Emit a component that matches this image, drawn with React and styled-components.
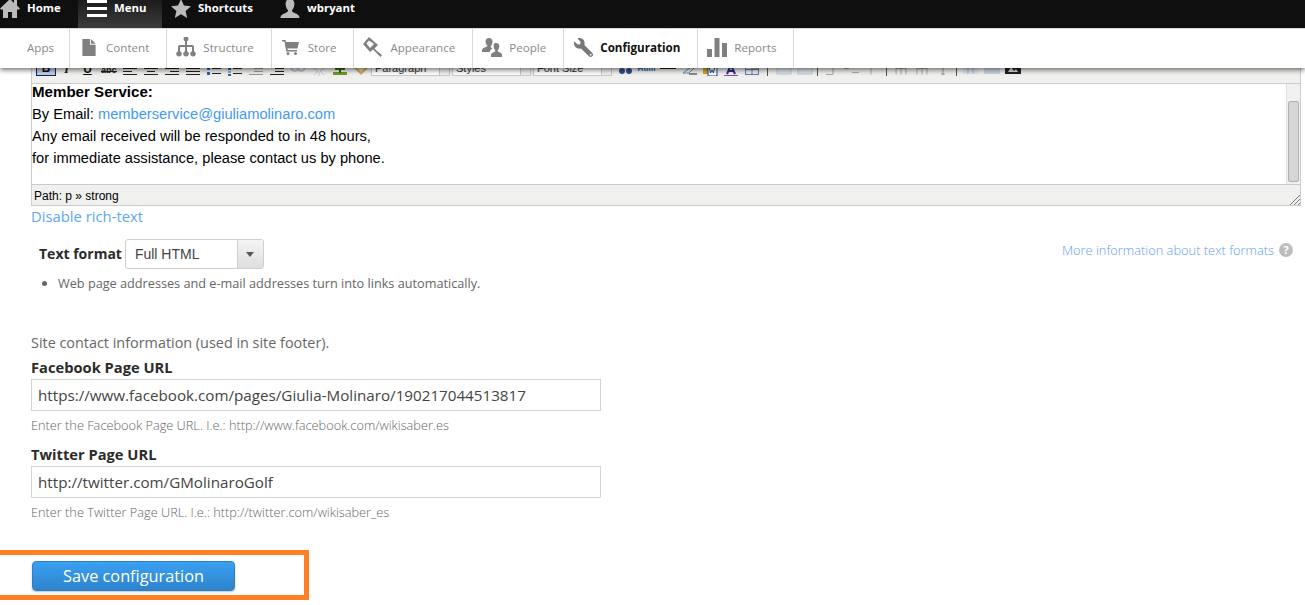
import styled, { createGlobalStyle } from 'styled-components'
import { FaWrench } from 'react-icons/fa'

const GlobalStyle = createGlobalStyle`
    html, body {
        margin: 0;
        padding: 0;
        height: 605px;
        overflow: hidden;
        background: #fff;
        font-family: "Open Sans", "Liberation Sans", sans-serif;
    }
    * {
        box-sizing: border-box;
    }
`

// Admin bars
const Header = styled.header`
    position: relative;
    z-index: 2;
    box-shadow: 0 2px 5px rgba(0, 0, 0, 0.55);
`
const TopBar = styled.nav`
    display: flex;
    height: 28px;
    background: #0f0f0f;
    overflow: hidden;
`
const TopItem = styled.a`
    display: flex;
    align-items: flex-start;
    gap: 7px;
    width: ${(p) => p.$width}px;
    padding: 0 0 0 ${(p) => p.$left || 0}px;
    font-size: 11.4px;
    font-weight: 700;
    line-height: 15px;
    color: #fff;
    background: ${(p) => (p.$active ? 'linear-gradient(#1c1c1c, #3c3c3c)' : 'transparent')};
    svg {
        flex: none;
        margin-top: -1px;
    }
`
const NavBar = styled.nav`
    display: flex;
    height: 40px;
    background: #fff;
    border-top: 1px solid #d8d8d8;
`
const NavItem = styled.a`
    display: flex;
    align-items: center;
    height: 100%;
    padding: ${(p) => (p.$plain ? '0 15px 3px 27px' : '0 17px 3px 5px')};
    border-right: 1px solid #d8d8d8;
    font-size: 11.6px;
    font-weight: ${(p) => (p.$active ? 700 : 400)};
    color: ${(p) => (p.$active ? '#111' : '#8a8a8a')};
`
const NavIcon = styled.span`
    display: flex;
    justify-content: center;
    flex: none;
    width: 28px;
    margin-right: 3px;
`
const WrenchIcon = styled(FaWrench)`
    width: 19px;
    height: 19px;
    color: #777;
    transform: scaleX(-1);
`

// Rich text editor
const Main = styled.main`
    padding: 0 4px 0 31px;
`
const Editor = styled.div`
    border: 1px solid #cbcbcb;
    border-top: 0;
`
const Toolbar = styled.div`
    display: flex;
    align-items: flex-end;
    height: 16px;
    padding: 0 0 7px 4px;
    background: #f0f0ee;
    border-bottom: 1px solid #cbcbcb;
    overflow: hidden;
`
const Tool = styled.span`
    display: flex;
    justify-content: center;
    align-items: flex-end;
    flex: none;
    width: ${(p) => p.$w || 21}px;
    height: 16px;
    font: ${(p) => p.$font || 'bold 12px "Liberation Sans", sans-serif'};
    line-height: 14px;
    color: ${(p) => p.$color || '#111'};
    text-decoration: ${(p) => (p.$under ? 'underline' : 'none')};
    ${(p) => p.$on && 'background: #c2cbe0; border: 1px solid #0a246a;'}
`
const ToolSep = styled.span`
    flex: none;
    width: 1px;
    height: 14px;
    margin: 0 ${(p) => p.$gap || 8}px;
    background: #555;
`
const ToolSelect = styled.span`
    display: flex;
    flex: none;
    width: ${(p) => p.$w}px;
    height: 20px;
    margin-right: 2px;
    padding-left: 3px;
    background: #fff;
    border: 1px solid #c8c8c8;
    font: 11px/22px "Liberation Sans", sans-serif;
    color: #333;
    span {
        flex: 1;
    }
    i {
        width: 10px;
        background: #f0f0ee;
        border-left: 1px solid #c8c8c8;
        position: relative;
    }
    i::after {
        content: '';
        position: absolute;
        left: 2px;
        bottom: 6px;
        border: 2.5px solid transparent;
        border-top-color: #222;
    }
`
const EditArea = styled.div`
    display: flex;
    height: 100px;
`
const Document = styled.div`
    flex: 1;
    overflow: hidden;
    font: 14.67px/22px "Liberation Sans", sans-serif;
    color: #000;
    p {
        margin: 0;
    }
    p:first-child {
        margin-top: -3px;
    }
    strong {
        font-size: 15.1px;
    }
    a {
        color: #3f9bf0;
    }
`
const Scrollbar = styled.div`
    flex: none;
    width: 14px;
    padding: 17px 1px 2px 1px;
    background: #f1f1f1;
    border-left: 1px solid #e0e0e0;
`
const Thumb = styled.div`
    height: 81px;
    background: #d6d6d6;
    border: 1px solid #b0b0b0;
    border-radius: 2px;
`
const StatusBar = styled.div`
    display: flex;
    justify-content: space-between;
    align-items: flex-end;
    height: 21px;
    padding-left: 2px;
    background: #f0f0ee;
    border-top: 1px solid #cbcbcb;
    font: 12px/20px "Liberation Sans", sans-serif;
    color: #000;
    span {
        align-self: flex-start;
        padding-top: 1px;
    }
`
const DisableLink = styled.a`
    display: block;
    font-size: 14.8px;
    line-height: 20px;
    color: #5aa9f2;
`

// Text format
const FormatRow = styled.div`
    display: flex;
    justify-content: space-between;
    align-items: flex-start;
    margin: 13px 8px 0 8px;
`
const FormatField = styled.div`
    display: flex;
    align-items: center;
    gap: 3px;
`
const BoldLabel = styled.label`
    display: block;
    font-size: ${(p) => p.$size || 14.7}px;
    font-weight: 700;
    line-height: 20px;
    color: #2b2b2b;
`
const Select = styled.div`
    display: flex;
    width: 139px;
    height: 30px;
    background: #fff;
    border: 1px solid #cfcfcf;
    border-radius: 3px;
    font: 14px/28px "Liberation Sans", sans-serif;
    color: #444;
    span {
        flex: 1;
        padding-left: 9px;
    }
    i {
        display: flex;
        align-items: center;
        justify-content: center;
        width: 26px;
        background: linear-gradient(#f4f4f4, #dedede);
        border-left: 1px solid #cfcfcf;
        border-radius: 0 2px 2px 0;
    }
    i::after {
        content: '';
        margin-top: 4px;
        border: 4.5px solid transparent;
        border-top: 5px solid #555;
    }
`
const MoreInfo = styled.a`
    display: flex;
    align-items: center;
    gap: 5px;
    margin-top: 2px;
    font-size: 12.85px;
    font-weight: 300;
    line-height: 18px;
    color: #5f9cf0;
`
const HelpDot = styled.span`
    width: 14px;
    height: 14px;
    border-radius: 50%;
    background: #bdbdbd;
    font-size: 11px;
    font-weight: 700;
    line-height: 14px;
    text-align: center;
    color: #fff;
`
const Tips = styled.ul`
    margin: 4px 0 0 0;
    padding: 0 0 0 27px;
    font-size: 12.7px;
    line-height: 20px;
    color: #666;
`

// Footer fields
const SiteNote = styled.p`
    margin: 40px 0 0 0;
    font-size: 14.4px;
    line-height: 20px;
    color: #666;
`
const Field = styled.div`
    margin-top: ${(p) => p.$top}px;
`
const TextInput = styled.div`
    width: 570px;
    height: 32px;
    margin-top: 2px;
    padding-left: 6px;
    border: 1px solid #d4d4d4;
    font-size: 15.2px;
    line-height: 30px;
    color: #444;
`
const Hint = styled.div`
    margin-top: 5px;
    font-size: 12.75px;
    font-weight: 300;
    line-height: 18px;
    color: #666;
`
const SaveBox = styled.div`
    display: flex;
    width: 319px;
    height: 50px;
    margin: 29px 0 0 -41px;
    padding: 6px 0 0 37px;
    border: 5px solid #ff7f27;
`
const SaveButton = styled.button`
    width: 203px;
    height: 30px;
    padding: 0;
    background: linear-gradient(#3aa0f2, #2e84cd);
    border: 1px solid #2f7fc6;
    border-radius: 4px;
    box-shadow: 0 1px 2px rgba(0, 0, 0, 0.25);
    font-family: inherit;
    font-size: 16.3px;
    line-height: 26px;
    color: #fff;
`

// Drawn icons
const Glyph = ({ w = 20, h = 20, box = '0 0 20 20', fill = '#808080', children }) => (
    <svg width={w} height={h} viewBox={box} fill={fill} aria-hidden="true">
        {children}
    </svg>
)

const topIcons = {
    home: <path d="M10 0 0 9.500 2 11 3 10v9h5v-6h4v6h5v-9l1 1 2-1.500-3-3V1h-3v3z" />,
    menu: <path d="M0 1h20v3H0zM0 8h20v3H0zM0 15h20v3H0z" />,
    star: <path d="M10 0l2.900 6.500 7.100.7-5.400 4.700 1.600 7L10 15.200 3.800 19l1.600-7L0 7.200l7.100-.7z" />,
    user: <path d="M10 0c3 0 4.600 2.300 4.400 5.300-.2 2.700-1 4.500-2.400 6 0 1.300.6 2 3 2.900 2.500 1 4.500 1.800 4.500 4.800H.5c0-3 2-3.800 4.500-4.800 2.400-.9 3-1.600 3-2.900-1.400-1.500-2.200-3.300-2.400-6C5.400 2.300 7 0 10 0z" />,
}

const navIcons = {
    content: (
        <Glyph w={14} h={17} box="0 0 14 18">
            <path d="M0 0h8v6h6v12H0zM9 0l5 5H9z" />
        </Glyph>
    ),
    structure: (
        <Glyph>
            <path d="M7.500 2a2.500 2.500 0 1 1 5 0 2.500 2.500 0 0 1-1.500 2.300V8H16a2 2 0 0 1 2 2v4.200a2.800 2.800 0 1 1-2 0V10h-5v4.200a2.800 2.800 0 1 1-2 0V10H4v4.200a2.800 2.800 0 1 1-2 0V10a2 2 0 0 1 2-2h5V4.300A2.500 2.500 0 0 1 7.500 2z" />
        </Glyph>
    ),
    store: (
        <Glyph w={17} h={16} box="0 0 17 16">
            <path d="M0 1h3.500l.5 2h13l-1.500 6.500H5.500l.3 1.500H15v1.500H4.300L2.400 2.500H0z" />
            <circle cx="6" cy="14.500" r="1.500" />
            <circle cx="13.500" cy="14.500" r="1.500" />
        </Glyph>
    ),
    appearance: (
        <Glyph>
            <path d="M6 0l9 8-3.500 3.500L14 14l5 4-1.500 2-5-5-2.500-2.500L7 15 0 7zM6 3.500 3.500 6.500 7 11l4-4z" />
        </Glyph>
    ),
    people: (
        <Glyph w={20} h={19} box="0 0 20 19">
            <path d="M7 0c2.500 0 3.700 1.800 3.500 4-.2 2-.8 3.200-1.800 4.200 0 1 .5 1.500 2 2.100-1.500.8-2.700 2-2.900 3.700H0v-1.500c0-2 1.500-2.600 3.300-3.300C4.800 8.600 5.300 8.200 5.300 7.500 4.300 6.700 3.700 5.500 3.500 4 3.300 1.800 4.500 0 7 0z" />
            <path d="M14 5c2.400 0 3.500 1.700 3.300 3.800-.1 1.500-.7 2.700-1.600 3.600 0 .9.500 1.300 1.800 1.800 1.500.6 2.500 1.200 2.500 2.800v2H9v-2c0-1.600 1-2.200 2.500-2.800 1.300-.5 1.800-.9 1.800-1.800-.9-.9-1.500-2.100-1.600-3.600C11.500 6.700 11.600 5 14 5z" />
        </Glyph>
    ),
    configuration: <WrenchIcon />,
    reports: (
        <Glyph h={19} box="0 0 20 19">
            <path d="M0 11h5v8H0zM7.500 0h5v19h-5zM15 5h5v14h-5z" />
        </Glyph>
    ),
}

const navItems = [
    { label: 'Content', icon: 'content' },
    { label: 'Structure', icon: 'structure' },
    { label: 'Store', icon: 'store' },
    { label: 'Appearance', icon: 'appearance' },
    { label: 'People', icon: 'people' },
    { label: 'Configuration', icon: 'configuration', active: true },
    { label: 'Reports', icon: 'reports' },
]

// small 16x16 pictures for the editor toolbar
const L = ({ d, c = '#222' }) => (
    <svg width="16" height="16" viewBox="0 0 16 16" fill="none" stroke={c} strokeWidth="1" aria-hidden="true">
        <path d={d} />
    </svg>
)
const lines = {
    left: 'M1 8.500h14M1 11.500h9M1 14.500h14',
    center: 'M1 8.500h14M4 11.500h8M1 14.500h14',
    right: 'M1 8.500h14M6 11.500h9M1 14.500h14',
    full: 'M1 8.500h14M1 11.500h14M1 14.500h14',
    outdent: 'M6 8.500h9M6 11.500h9M1 14.500h14',
}

const Icon16 = ({ children }) => (
    <svg width="16" height="16" viewBox="0 0 16 16" aria-hidden="true">
        {children}
    </svg>
)

function Toolbars() {
    return (
        <Toolbar>
            <Tool $w={20} $on>B</Tool>
            <Tool $font='italic bold 12px "Liberation Serif", serif'>I</Tool>
            <Tool $under>U</Tool>
            <Tool>
                <Icon16>
                    <path d="M0 11.500h16" stroke="#222" strokeWidth="1" />
                    <text x="0" y="13" fontSize="9" fontFamily="Liberation Sans" fill="#222">abc</text>
                </Icon16>
            </Tool>
            <Tool><L d={lines.left} /></Tool>
            <Tool><L d={lines.center} /></Tool>
            <Tool><L d={lines.right} /></Tool>
            <Tool><L d={lines.full} /></Tool>
            <Tool>
                <Icon16>
                    <path d="M6 8.500h9M6 13.500h9" stroke="#222" />
                    <rect x="1" y="7" width="3" height="3" fill="#2d5fb0" />
                    <rect x="1" y="12" width="3" height="3" fill="#2d5fb0" />
                </Icon16>
            </Tool>
            <Tool>
                <Icon16>
                    <path d="M6 8.500h9M6 13.500h9" stroke="#222" />
                    <path d="M1 8h3v2H1zM1 11.500h3v1H1zM1 14h3v2H1z" fill="#2d5fb0" />
                </Icon16>
            </Tool>
            <Tool><L d={lines.outdent} c="#999" /></Tool>
            <Tool><L d={lines.outdent} /></Tool>
            <Tool>
                <Icon16>
                    <path d="M1 8c2 4 5 4 7 1 2 3 5 3 7-1" fill="none" stroke="#b9c3d2" strokeWidth="2" />
                </Icon16>
            </Tool>
            <Tool>
                <Icon16>
                    <path d="M2 8l5 3-4 4M14 8l-5 3 4 4M8 12v4" fill="none" stroke="#c2c8d2" strokeWidth="1" />
                </Icon16>
            </Tool>
            <Tool>
                <Icon16>
                    <path d="M1 12h14v3H1z" fill="#6f9a1a" />
                    <path d="M3 8h10v2H9v3H7v-3H3z" fill="#2c6a10" />
                </Icon16>
            </Tool>
            <Tool>
                <Icon16>
                    <path d="M0 7h16l-8 8z" fill="#c9ac6a" />
                    <path d="M3 7h10l-5 5z" fill="#f0dca0" />
                </Icon16>
            </Tool>
            <ToolSelect $w={79}><span>Paragraph</span><i /></ToolSelect>
            <ToolSelect $w={79}><span>Styles</span><i /></ToolSelect>
            <ToolSelect $w={79}><span>Font Size</span><i /></ToolSelect>
            <Tool $w={1} />
            <Tool>
                <Icon16>
                    <circle cx="4" cy="11" r="3" fill="#2f4f87" />
                    <circle cx="11" cy="11" r="3" fill="#2f4f87" />
                </Icon16>
            </Tool>
            <Tool $font='bold 8px "Liberation Sans", sans-serif' $color="#2d5fb0">Html</Tool>
            <Tool><L d="M0 8.500h16" /></Tool>
            <Tool>
                <Icon16>
                    <path d="M2 13l8-6h4l-6 6z" fill="#e4edf5" stroke="#6b8bb0" />
                    <path d="M8 14h8" stroke="#222" />
                </Icon16>
            </Tool>
            <Tool>
                <Icon16>
                    <rect x="1" y="6" width="6" height="8" fill="#d9a01e" />
                    <rect x="6" y="6" width="9" height="10" fill="#fff" stroke="#1f3f9a" />
                    <path d="M7.500 8l1 5 1.500-3 1.500 3 1-5" fill="none" stroke="#1f3f9a" />
                </Icon16>
            </Tool>
            <Tool>
                <Icon16>
                    <path d="M4 14l4-9 4 9M6 11h5" fill="none" stroke="#2a2a8a" strokeWidth="2" />
                    <path d="M1 15.500h14" stroke="#8a4ab0" />
                </Icon16>
            </Tool>
            <Tool>
                <Icon16>
                    <rect x="1.500" y="5.500" width="13" height="9" fill="#e8eef6" stroke="#5f7fa8" />
                    <path d="M1.500 9.500h13M8 5.500v9" stroke="#5f7fa8" />
                    <rect x="8" y="6" width="6" height="3" fill="#e0b050" />
                </Icon16>
            </Tool>
            <ToolSep $gap={5} />
            <Tool><Icon16><rect x="1" y="6" width="14" height="8" fill="#dfe6ef" stroke="#c0cad8" /></Icon16></Tool>
            <Tool><Icon16><rect x="1" y="6" width="14" height="8" fill="#dfe6ef" stroke="#c0cad8" /></Icon16></Tool>
            <ToolSep $gap={2} />
            <Tool><L d="M3 6.500h7v8H3" c="#aaa" /></Tool>
            <Tool><L d="M0 8.500h5M8 12.500h7" c="#aaa" /></Tool>
            <Tool><L d="M1 7.500h11M6 7.500v7M13 6h3" c="#c9a0a0" /></Tool>
            <ToolSep $gap={3} />
            <Tool><L d="M3 8.500h10M3 8.500v6M8 8.500v6M13 8.500v6" c="#aaa" /></Tool>
            <Tool><L d="M3 8.500h10M3 8.500v6M8 8.500v6M13 8.500v6" c="#aaa" /></Tool>
            <Tool><L d="M8 6v9M6 14h4" c="#999" /></Tool>
            <ToolSep $gap={3} />
            <Tool><Icon16><path d="M0 6h16v8H0z" fill="#dfe6ef" /><path d="M5 6v8M10 6v8" stroke="#aab6c8" /></Icon16></Tool>
            <Tool><Icon16><path d="M0 6h16v8H0z" fill="#c9d6ea" /></Icon16></Tool>
            <Tool>
                <Icon16>
                    <path d="M0 5h16v9H0z" fill="#222" />
                    <path d="M3 12l3-5 3 4 2-2 2 3z" fill="#d8d8d8" />
                </Icon16>
            </Tool>
        </Toolbar>
    )
}

function App() {
    return (
        <>
            <GlobalStyle />
            <Header>
                <TopBar>
                    <TopItem $width={78}>
                        <Glyph fill="#bbb">{topIcons.home}</Glyph>
                        Home
                    </TopItem>
                    <TopItem $width={84} $left={9} $active>
                        <Glyph fill="#fff">{topIcons.menu}</Glyph>
                        Menu
                    </TopItem>
                    <TopItem $width={109} $left={9}>
                        <Glyph fill="#bbb">{topIcons.star}</Glyph>
                        Shortcuts
                    </TopItem>
                    <TopItem $width={120} $left={9}>
                        <Glyph fill="#bbb">{topIcons.user}</Glyph>
                        wbryant
                    </TopItem>
                </TopBar>
                <NavBar>
                    <NavItem $plain>Apps</NavItem>
                    {navItems.map((item) => (
                        <NavItem key={item.label} $active={item.active}>
                            <NavIcon>{navIcons[item.icon]}</NavIcon>
                            {item.label}
                        </NavItem>
                    ))}
                </NavBar>
            </Header>
            <Main>
                <Editor>
                    <Toolbars />
                    <EditArea>
                        <Document>
                            <p><strong>Member Service:</strong></p>
                            <p>By Email: <a>memberservice@giuliamolinaro.com</a></p>
                            <p>Any email received will be responded to in 48 hours,</p>
                            <p>for immediate assistance, please contact us by phone.</p>
                        </Document>
                        <Scrollbar>
                            <Thumb />
                        </Scrollbar>
                    </EditArea>
                    <StatusBar>
                        <span>Path: p » strong</span>
                        <svg width="10" height="10" viewBox="0 0 10 10" fill="none" stroke="#777" aria-hidden="true">
                            <path d="M0 10 10 0M4 10l6-6M8 10l2-2" />
                        </svg>
                    </StatusBar>
                </Editor>
                <DisableLink>Disable rich-text</DisableLink>
                <FormatRow>
                    <FormatField>
                        <BoldLabel $size={14}>Text format</BoldLabel>
                        <Select>
                            <span>Full HTML</span>
                            <i />
                        </Select>
                    </FormatField>
                    <MoreInfo>
                        More information about text formats
                        <HelpDot>?</HelpDot>
                    </MoreInfo>
                </FormatRow>
                <Tips>
                    <li>Web page addresses and e-mail addresses turn into links automatically.</li>
                </Tips>
                <SiteNote>Site contact information (used in site footer).</SiteNote>
                <Field $top={4}>
                    <BoldLabel>Facebook Page URL</BoldLabel>
                    <TextInput>https://www.facebook.com/pages/Giulia-Molinaro/190217044513817</TextInput>
                    <Hint>Enter the Facebook Page URL. I.e.: http://www.facebook.com/wikisaber.es</Hint>
                </Field>
                <Field $top={10}>
                    <BoldLabel>Twitter Page URL</BoldLabel>
                    <TextInput>http://twitter.com/GMolinaroGolf</TextInput>
                    <Hint>Enter the Twitter Page URL. I.e.: http://twitter.com/wikisaber_es</Hint>
                </Field>
                <SaveBox>
                    <SaveButton>Save configuration</SaveButton>
                </SaveBox>
            </Main>
        </>
    )
}

export default App
